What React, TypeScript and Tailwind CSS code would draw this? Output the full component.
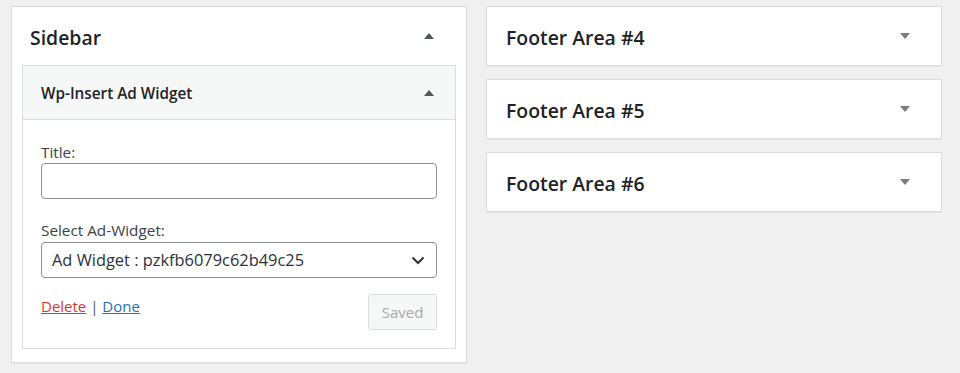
import React from "react";

const TriUp = () => (
  <svg width="10" height="6" viewBox="0 0 10 6" className="block">
    <path d="M0 6 L5 0 L10 6 Z" fill="#50575e" />
  </svg>
);
const TriDown = () => (
  <svg width="10" height="6" viewBox="0 0 10 6" className="block">
    <path d="M0 0 L5 6 L10 0 Z" fill="#787c82" />
  </svg>
);

const FooterArea = ({ n }: { n: number }) => (
  <div className="h-[60px] bg-white border border-[#dcdcde] shadow-[0_1px_1px_rgba(0,0,0,0.04)] flex items-center justify-between pl-[19px] pr-[31px]">
    <h2 className="text-[19.4px] font-semibold text-[#1d2327] leading-none pt-[4px]">Footer Area #{n}</h2>
    <TriDown />
  </div>
);

export default function App() {
  return (
    <div
      className="w-[960px] h-[373px] bg-[#f0f0f1] flex gap-[19px] pl-[11px] pt-[6px] overflow-hidden"
      style={{ fontFamily: '"Open Sans", "Noto Sans", sans-serif' }}
    >
      <div className="w-[456px] h-[357px] bg-white border border-[#dcdcde] shadow-[0_1px_1px_rgba(0,0,0,0.04)] flex flex-col">
        <div className="h-[58px] flex items-center justify-between pl-[18px] pr-[32px]">
          <h2 className="text-[19.4px] font-semibold text-[#1d2327] leading-none pt-[4px]">Sidebar</h2>
          <TriUp />
        </div>
        <div className="mx-[10px] border border-[#dcdcde] flex flex-col">
          <div className="h-[54px] bg-[#f6f7f7] border-b border-[#dcdcde] flex items-center justify-between pl-[18px] pr-[21px]">
            <h3 className="text-[15.3px] font-semibold text-[#1d2327] leading-none pt-[3px]">Wp-Insert Ad Widget</h3>
            <TriUp />
          </div>
          <div className="px-[18px] pt-[23px] pb-[18px] flex flex-col">
            <label className="text-[15.3px] text-[#3c434a] leading-[18px]">Title:</label>
            <div className="mt-[2px] h-[36px] w-[396px] border border-[#8c8f94] rounded-[4px] bg-white" />
            <label className="mt-[22px] text-[15.3px] text-[#3c434a] leading-[18px]">Select Ad-Widget:</label>
            <div className="mt-[3px] h-[36px] w-[396px] border border-[#8c8f94] rounded-[4px] bg-white flex items-center justify-between pl-[10px] pr-[11px]">
              <span className="text-[16.4px] text-[#2c3338] leading-none">Ad Widget : pzkfb6079c62b49c25</span>
              <svg width="14" height="9" viewBox="0 0 14 9">
                <path d="M1.5 1.5 L7 7 L12.5 1.5" stroke="#2c3338" strokeWidth="2" fill="none" />
              </svg>
            </div>
            <div className="mt-[16px] flex items-start justify-between w-[396px]">
              <div className="text-[15px] leading-[20px] text-[#50575e] pt-[2px]">
                <a className="text-[#d63638] underline">Delete</a> | <a className="text-[#2271b1] underline">Done</a>
              </div>
              <button className="h-[36px] w-[69px] border border-[#dcdcde] rounded-[3px] bg-[#f6f7f7] text-[#a7aaad] text-[15px]">
                Saved
              </button>
            </div>
          </div>
        </div>
      </div>
      <div className="w-[456px] flex flex-col gap-[13px]">
        <FooterArea n={4} />
        <FooterArea n={5} />
        <FooterArea n={6} />
      </div>
    </div>
  );
}
